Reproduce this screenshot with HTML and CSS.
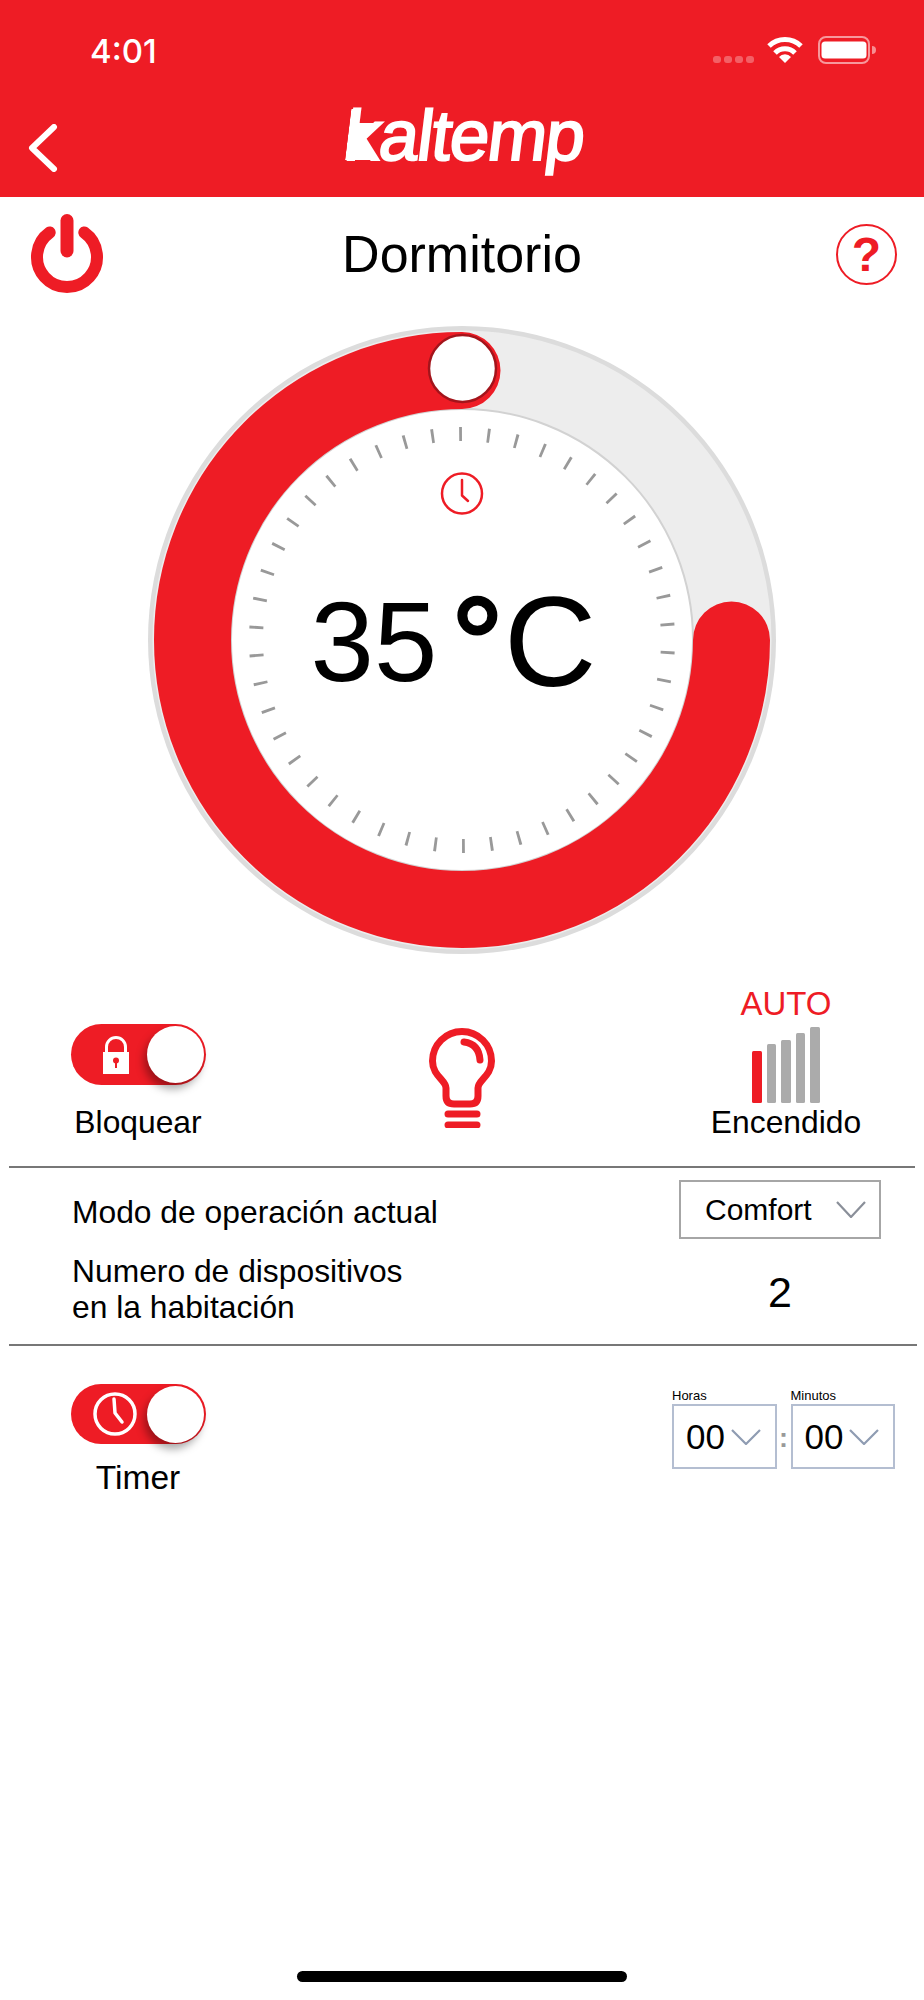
FILE: index.html
```html
<!DOCTYPE html>
<html lang="es">
<head>
<meta charset="UTF-8">
<meta name="viewport" content="width=device-width, initial-scale=1.0">
<title>Kaltemp - Dormitorio</title>
<link rel="stylesheet" href="styles.css">
</head>
<body>

<header class="topbar">
  <div class="status">
    <span class="clock-time">4:01</span>
    <svg class="status-icons" width="163" height="28" viewBox="0 0 163 28">
      <g class="signal">
        <rect x="0" y="20" width="8" height="7" rx="3"/>
        <rect x="11" y="20" width="8" height="7" rx="3"/>
        <rect x="22" y="20" width="8" height="7" rx="3"/>
        <rect x="33" y="20" width="8" height="7" rx="3"/>
      </g>
      <path class="wifi" d="M56 10A23 23 0 0 1 88 10M62 17A14 14 0 0 1 82 17"/>
      <path class="wifi-dot" d="M72 27L66 21A8 8 0 0 1 78 21Z"/>
      <rect class="batt-case" x="106" y="1" width="50" height="26" rx="7"/>
      <rect class="batt-fill" x="108.500" y="5.500" width="45" height="17" rx="3.500"/>
      <path class="batt-tip" d="M159 10A4 4 0 0 1 159 18Z"/>
    </svg>
  </div>
  <div class="nav">
    <svg class="back" width="30" height="48" viewBox="0 0 30 48">
      <path d="M26 3L4 24L26 45"/>
    </svg>
    <span class="logo"><span class="logo-k">k</span>altemp</span>
  </div>
</header>

<section class="title-row">
  <svg class="power" width="80" height="80" viewBox="0 0 80 80">
    <path class="power-arc" d="M22.700 18.500A30 30 0 1 0 57.300 18.500"/>
    <path class="power-bar" d="M40 6.500V37"/>
  </svg>
  <h1 class="room">Dormitorio</h1>
  <span class="help">?</span>
</section>

<div class="dial-wrap">
  <svg class="dial" width="640" height="640" viewBox="0 0 640 640">
    <circle class="dial-edge" cx="320" cy="320" r="314"/>
    <circle class="dial-track" cx="320" cy="320" r="269.500"/>
    <circle class="dial-face" cx="320" cy="320" r="231"/>
    <circle class="dial-ticks" cx="320" cy="320" r="206" pathLength="46" transform="rotate(-90.400 320 320)"/>
    <path class="dial-value" d="M589.500 320A269.500 269.500 0 1 1 320 50.500"/>
    <circle class="dial-knob" cx="320.500" cy="48.500" r="33.500"/>
    <circle class="dial-clock" cx="320" cy="173.500" r="20"/>
    <path class="dial-clock" d="M320 160V175.500L326 181"/>
    <text class="dial-text"><tspan class="temp" x="168.500" y="361">35</tspan><tspan class="degree" x="309" y="369">°</tspan><tspan class="unit" x="362" y="366">C</tspan></text>
  </svg>
</div>

<section class="controls">
  <div class="control">
    <div class="toggle toggle-lock">
      <svg width="26" height="38" viewBox="0 0 26 38">
        <path class="lock-arc" d="M3.500 17V11A9.500 9.500 0 0 1 22.500 11V17"/>
        <rect class="lock-body" x="0" y="16" width="26" height="22"/>
        <circle class="lock-hole" cx="13" cy="24.500" r="3"/>
        <rect class="lock-hole" x="12" y="25" width="2" height="7"/>
      </svg>
      <span class="knob"></span>
    </div>
    <span class="label">Bloquear</span>
  </div>

  <svg class="bulb" width="66" height="100" viewBox="0 0 66 100">
    <path d="M17 60C17 52 3.500 48 3.500 33A29.500 29.500 0 0 1 62.500 33C62.500 48 49 52 49 60V68Q49 76 41 76H25Q17 76 17 68Z"/>
    <path d="M35 14Q50 16 51 32"/>
    <path d="M19 86H48M19 97H48"/>
  </svg>

  <div class="control control-power">
    <span class="auto">AUTO</span>
    <div class="bars">
      <span class="bar bar-on b1"></span>
      <span class="bar b2"></span>
      <span class="bar b3"></span>
      <span class="bar b4"></span>
      <span class="bar b5"></span>
    </div>
    <span class="label">Encendido</span>
  </div>
</section>

<hr class="rule">

<section class="info">
  <span class="info-label info-first">Modo de operación actual</span>
  <div class="select">
    <span>Comfort</span>
    <svg class="chevron chevron-grey" width="30" height="17" viewBox="0 0 30 17"><path d="M1 1L15 16L29 1"/></svg>
  </div>
  <span class="info-label">Numero de dispositivos<br>en la habitación</span>
  <span class="count">2</span>
</section>

<hr class="rule rule-long">

<section class="timer">
  <div class="control">
    <div class="toggle">
      <svg width="44" height="44" viewBox="0 0 44 44">
        <circle class="clock-line" cx="22" cy="22" r="20"/>
        <path class="clock-line" d="M21 7L22 21L29 30"/>
      </svg>
      <span class="knob"></span>
    </div>
    <span class="label label-timer">Timer</span>
  </div>
  <div class="time">
    <div class="time-field">
      <span class="time-name">Horas</span>
      <div class="time-box">
        <span>00</span>
        <svg class="chevron chevron-blue" width="30" height="16" viewBox="0 0 30 16"><path d="M1 1L15 15L29 1"/></svg>
      </div>
    </div>
    <span class="time-sep">:</span>
    <div class="time-field">
      <span class="time-name">Minutos</span>
      <div class="time-box">
        <span>00</span>
        <svg class="chevron chevron-blue" width="30" height="16" viewBox="0 0 30 16"><path d="M1 1L15 15L29 1"/></svg>
      </div>
    </div>
  </div>
</section>

<div class="home-bar"></div>

</body>
</html>
```

FILE: styles.css
```css
html, body {
  margin: 0;
  height: 2000px;
}
body {
  display: flex;
  flex-direction: column;
  background: #fff;
  color: #000;
  font-family: "Liberation Sans", Arial, sans-serif;
  overflow: hidden;
}
svg {
  display: block;
  flex: none;
}

/* top red bar */
.topbar {
  height: 197px;
  background: #ee1c25;
  color: #fff;
}
.status {
  display: flex;
  justify-content: space-between;
  align-items: center;
  padding: 31px 48px 0 90px;
  height: 40px;
}
.clock-time {
  font-family: Inter, "Liberation Sans", sans-serif;
  font-size: 33px;
  font-weight: 500;
  line-height: 40px;
}
.status-icons {
  margin-top: -2px;
}
.signal rect {
  fill: rgba(255,255,255,0.3);
}
.wifi {
  fill: none;
  stroke: #fff;
  stroke-width: 5;
}
.wifi-dot {
  fill: #fff;
}
.batt-case {
  fill: none;
  stroke: rgba(255,255,255,0.55);
  stroke-width: 2;
}
.batt-fill {
  fill: #fff;
}
.batt-tip {
  fill: rgba(255,255,255,0.5);
}
.nav {
  display: grid;
  grid-template-columns: 1fr auto 1fr;
}
.back {
  margin: 53px 0 0 28px;
}
.back path {
  fill: none;
  stroke: #fff;
  stroke-width: 6;
  stroke-linecap: round;
  stroke-linejoin: round;
}
.logo {
  margin-top: 29px;
  font-size: 71px;
  line-height: 71px;
  letter-spacing: -1.500px;
  -webkit-text-stroke: 2px #fff;
  transform: skewX(-7deg);
  transform-origin: 0 60px;
}
.logo-k {
  position: relative;
  display: inline-block;
}
/* the k of the logo is a solid wedge */
.logo-k::before {
  content: "";
  position: absolute;
  left: 2px;
  top: 9px;
  width: 33px;
  height: 51px;
  background: #fff;
  clip-path: polygon(0 0, 8px 0, 8.500px 14px, 30.500px 14px, 16px 33px, 32px 51px, 0 51px);
}

/* room title */
.title-row {
  display: grid;
  grid-template-columns: 1fr auto 1fr;
  align-items: center;
  height: 80px;
  padding: 17px 27px 0;
}
.power-arc, .power-bar {
  fill: none;
  stroke: #ee1c25;
  stroke-linecap: round;
}
.power-arc {
  stroke-width: 12;
}
.power-bar {
  stroke-width: 13;
}
.room {
  margin: 0;
  font-size: 52px;
  font-weight: normal;
}
.help {
  justify-self: end;
  display: flex;
  justify-content: center;
  align-items: center;
  width: 57px;
  height: 57px;
  border: 2px solid #ee1c25;
  border-radius: 50%;
  color: #ee1c25;
  font-size: 48px;
  font-weight: bold;
}

/* dial */
.dial-wrap {
  display: flex;
  justify-content: center;
  margin-top: 25.500px;
}
.dial-edge {
  fill: #dcdcdc;
}
.dial-track {
  fill: none;
  stroke: #ededed;
  stroke-width: 80;
}
.dial-face {
  fill: #fff;
  stroke: #d2d2d2;
  stroke-width: 2;
}
.dial-ticks {
  fill: none;
  stroke: #999;
  stroke-width: 14;
  stroke-dasharray: 0.1 0.9;
  stroke-dashoffset: 0.05;
}
.dial-value {
  fill: none;
  stroke: #ee1c25;
  stroke-width: 77;
  stroke-linecap: round;
}
.dial-knob {
  fill: #fff;
  stroke: #a3141b;
  stroke-width: 2.500;
}
.dial-clock {
  fill: none;
  stroke: #ee1c25;
  stroke-width: 2.500;
  stroke-linecap: round;
  stroke-linejoin: round;
}
.temp {
  font-size: 114px;
}
.degree {
  font-size: 132px;
  stroke: #000;
  stroke-width: 3;
}
.unit {
  font-size: 128px;
}

/* lock, bulb, power level */
.controls {
  display: grid;
  grid-template-columns: 276px 1fr 276px;
  align-items: end;
  padding: 26.500px 0 26px;
}
.control {
  display: flex;
  flex-direction: column;
  align-items: center;
}
.toggle {
  box-sizing: border-box;
  display: flex;
  justify-content: space-between;
  align-items: center;
  width: 135px;
  height: 61px;
  padding: 0 2px 0 32px;
  border-radius: 31px;
  background: #ee1c25;
}
.toggle-lock {
  margin-bottom: 19px;
}
.knob {
  box-sizing: border-box;
  width: 57px;
  height: 57px;
  border-radius: 50%;
  background: #fff;
  box-shadow: -3px 6px 9px rgba(0,0,0,0.35);
}
.lock-arc {
  fill: none;
  stroke: #fff;
  stroke-width: 3;
}
.lock-body {
  fill: #fff;
}
.lock-hole {
  fill: #ee1c25;
}
.label {
  font-size: 31.800px;
  line-height: 36px;
}
.bulb {
  justify-self: center;
  margin-bottom: 12px;
}
.bulb path {
  fill: none;
  stroke: #ee1c25;
  stroke-width: 7;
  stroke-linecap: round;
}
.auto {
  color: #ee1c25;
  font-size: 33px;
  line-height: 36px;
}
.bars {
  display: flex;
  align-items: flex-end;
  gap: 5px;
  height: 76px;
  margin: 5px 0 1px;
}
.bar {
  width: 9.500px;
  border-radius: 1.500px;
  background: #ababab;
}
.bar-on {
  background: #ee1c25;
}
.b1 { height: 52px; }
.b2 { height: 59px; }
.b3 { height: 63px; }
.b4 { height: 70px; }
.b5 { height: 76px; }

.rule {
  flex: none;
  height: 2px;
  width: 906px;
  margin: 0 9px;
  border: 0;
  background: #777;
}
.rule-long {
  width: 908px;
}

/* mode and device count */
.info {
  display: grid;
  grid-template-columns: 1fr 202px;
  row-gap: 14px;
  align-items: start;
  padding: 12px 43px 19px 72px;
}
.info-label {
  font-size: 31.800px;
  line-height: 36px;
}
.info-first {
  padding-top: 14px;
}
.select {
  box-sizing: border-box;
  display: flex;
  justify-content: space-between;
  align-items: center;
  height: 59px;
  padding: 0 13px 0 24px;
  border: 2px solid #a6a6a6;
  font-size: 30px;
}
.chevron path {
  fill: none;
  stroke-width: 2.200;
}
.chevron-grey path {
  stroke: #8a8f99;
}
.chevron-blue path {
  stroke: #8f9cb2;
}
.count {
  padding-top: 12px;
  font-size: 43px;
  line-height: 54px;
  text-align: center;
}

/* timer */
.timer {
  display: grid;
  grid-template-columns: 276px 1fr;
  align-items: start;
  padding: 38px 29px 0 0;
}
.timer .toggle {
  padding-left: 22px;
  height: 60px;
}
.clock-line {
  fill: none;
  stroke: #fff;
  stroke-width: 3.500;
  stroke-linecap: round;
  stroke-linejoin: round;
}
.label-timer {
  margin-top: 16px;
  font-size: 33.500px;
}
.time {
  display: flex;
  justify-content: flex-end;
  align-items: flex-end;
  margin-top: 4px;
}
.time-field {
  display: flex;
  flex-direction: column;
}
.time-name {
  font-size: 13px;
  line-height: 16px;
}
.time-box {
  box-sizing: border-box;
  display: flex;
  align-items: center;
  gap: 6px;
  width: 104.500px;
  height: 65px;
  padding-left: 12px;
  border: 2px solid #b4bed1;
  font-size: 35px;
}
.time-sep {
  width: 14px;
  color: #999;
  font-size: 27px;
  font-weight: bold;
  line-height: 62px;
  text-align: center;
}

.home-bar {
  flex: none;
  width: 330px;
  height: 11px;
  margin: auto auto 18px;
  border-radius: 5.500px;
  background: #000;
}
```
